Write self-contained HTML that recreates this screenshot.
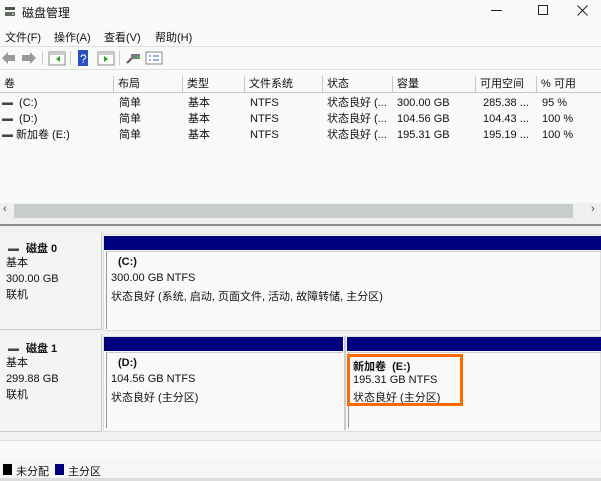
<!DOCTYPE html><html><head><meta charset="utf-8"><style>
*{margin:0;padding:0;box-sizing:border-box}
body{width:601px;height:481px;overflow:hidden;background:#f7faf7;font-family:"Liberation Sans","Noto Sans CJK SC",sans-serif;font-size:11px;color:#111;position:relative}
.a{position:absolute;white-space:nowrap}
.hd{position:absolute;top:76px;height:17px;border-right:1px solid #c8c8c8;border-bottom:1px solid #c8c8c8;background:#f7faf7;padding:1px 4px;line-height:15px}
.b{font-weight:bold}
.drv{display:inline-block;width:11px;height:3px;background:#444;border-top:1px solid #999;vertical-align:middle;margin-right:3px}
</style></head><body>
<!-- title -->
<div class="a" style="left:4px;top:6px;width:12px;height:11px;"><svg width="12" height="11"><rect x="1" y="1" width="10" height="3" fill="#555"/><rect x="1" y="6" width="10" height="4" fill="#666"/><rect x="8" y="7" width="2" height="2" fill="#7c7"/></svg></div>
<div class="a" style="left:22px;top:4px;font-size:12px">磁盘管理</div>
<div class="a" style="left:491px;top:10px;width:11px;height:1px;background:#222"></div>
<div class="a" style="left:538px;top:5px;width:10px;height:10px;border:1px solid #222"></div>
<svg class="a" style="left:577px;top:5px" width="11" height="11"><path d="M0.5 0.5L10.5 10.5M10.5 0.5L0.5 10.5" stroke="#222" stroke-width="1"/></svg>
<!-- menu -->
<div class="a" style="left:5px;top:29px">文件(F)</div>
<div class="a" style="left:54px;top:29px">操作(A)</div>
<div class="a" style="left:104px;top:29px">查看(V)</div>
<div class="a" style="left:155px;top:29px">帮助(H)</div>
<div class="a" style="left:0;top:46px;width:601px;height:1px;background:#dde0dd"></div>
<!-- toolbar -->
<svg class="a" style="left:0;top:48px" width="170" height="20">
<path d="M2 10 L8 4 V7 H15 V13 H8 V16 Z" fill="#999"/>
<path d="M36 10 L30 4 V7 H22 V13 H30 V16 Z" fill="#999"/>
<rect x="42" y="3" width="1" height="14" fill="#ccc"/>
<rect x="49" y="4" width="16" height="13" fill="#fff" stroke="#888"/><rect x="49" y="4" width="16" height="3" fill="#ccc"/><path d="M60 8 L56 11 L60 14Z" fill="#2a2"/>
<rect x="70" y="3" width="1" height="14" fill="#ccc"/>
<rect x="78" y="2" width="10" height="16" fill="#2b4fbf"/><text x="80" y="15" fill="#fff" font-size="12" font-family="Liberation Sans">?</text>
<rect x="98" y="4" width="16" height="13" fill="#fff" stroke="#888"/><rect x="98" y="4" width="16" height="3" fill="#ccc"/><path d="M104 8 L108 11 L104 14Z" fill="#2a2"/>
<rect x="119" y="3" width="1" height="14" fill="#ccc"/>
<path d="M127 15 L132 10" stroke="#555" stroke-width="2"/><rect x="131" y="6" width="9" height="5" fill="#778"/><rect x="137" y="8" width="3" height="2" fill="#3c3"/>
<rect x="146" y="4" width="16" height="12" fill="#fff" stroke="#888"/><path d="M149 8h2M153 8h6M149 12h2M153 12h6" stroke="#36c"/>
</svg>
<div class="a" style="left:0;top:69px;width:601px;height:1px;background:#dde0dd"></div>
<!-- list header -->
<div class="hd" style="left:0;width:114px">卷</div>
<div class="hd" style="left:114px;width:69px">布局</div>
<div class="hd" style="left:183px;width:62px">类型</div>
<div class="hd" style="left:245px;width:78px">文件系统</div>
<div class="hd" style="left:323px;width:70px">状态</div>
<div class="hd" style="left:393px;width:83px">容量</div>
<div class="hd" style="left:476px;width:61px">可用空间</div>
<div class="hd" style="left:537px;width:64px;border-right:none">% 可用</div>
<!-- rows -->
<div class="a" style="left:2px;top:95px;line-height:16px"><span class="drv"></span> (C:)<br><span class="drv"></span> (D:)<br><span class="drv"></span>新加卷 (E:)</div>
<div class="a" style="left:119px;top:95px;line-height:16px">简单<br>简单<br>简单</div>
<div class="a" style="left:188px;top:95px;line-height:16px">基本<br>基本<br>基本</div>
<div class="a" style="left:250px;top:95px;line-height:16px">NTFS<br>NTFS<br>NTFS</div>
<div class="a" style="left:327px;top:95px;line-height:16px">状态良好 (...<br>状态良好 (...<br>状态良好 (...</div>
<div class="a" style="left:397px;top:95px;line-height:16px">300.00 GB<br>104.56 GB<br>195.31 GB</div>
<div class="a" style="left:483px;top:95px;line-height:16px">285.38 ...<br>104.43 ...<br>195.19 ...</div>
<div class="a" style="left:542px;top:95px;line-height:16px">95 %<br>100 %<br>100 %</div>
<!-- hscroll -->
<div class="a" style="left:0;top:203px;width:601px;height:16px;background:#eef0ee"></div>
<div class="a" style="left:14px;top:204px;width:559px;height:14px;background:#c9cdc9"></div>
<div class="a" style="left:3px;top:203px;font-size:11px;color:#444">‹</div>
<div class="a" style="left:591px;top:203px;font-size:11px;color:#444">›</div>
<!-- splitter -->
<div class="a" style="left:0;top:219px;width:601px;height:6px;background:#eef0ee"></div>
<div class="a" style="left:0;top:224px;width:601px;height:2px;background:#8f918f"></div>
<div class="a" style="left:0;top:226px;width:601px;height:214px;background:#f0f2f0"></div>
<!-- disk 0 -->
<div class="a" style="left:0;top:232px;width:102px;height:98px;background:#f3f5f3;border-right:1px solid #ccc;border-bottom:1px solid #ccc"></div>
<div class="a" style="left:8px;top:240px"><span class="drv"></span><b style="margin-left:4px">磁盘 0</b></div>
<div class="a" style="left:6px;top:255px;line-height:16px">基本<br>300.00 GB<br>联机</div>
<div class="a" style="left:103px;top:234px;width:498px;height:97px;background:#f7faf7;border:1px solid #ddd"></div>
<div class="a" style="left:104px;top:236px;width:497px;height:14px;background:#00007f"></div>
<div class="a" style="left:106px;top:251px;width:495px;height:78px;border-left:1px solid #999;border-top:1px solid #ccc"></div>
<div class="a b" style="left:118px;top:256px">(C:)</div>
<div class="a" style="left:111px;top:272px">300.00 GB NTFS</div>
<div class="a" style="left:111px;top:288px">状态良好 (系统, 启动, 页面文件, 活动, 故障转储, 主分区)</div>
<!-- disk 1 -->
<div class="a" style="left:0;top:334px;width:102px;height:98px;background:#f3f5f3;border-right:1px solid #ccc;border-bottom:1px solid #ccc"></div>
<div class="a" style="left:8px;top:340px"><span class="drv"></span><b style="margin-left:4px">磁盘 1</b></div>
<div class="a" style="left:6px;top:355px;line-height:16px">基本<br>299.88 GB<br>联机</div>
<div class="a" style="left:103px;top:336px;width:498px;height:96px;background:#f7faf7;border:1px solid #ddd"></div>
<div class="a" style="left:104px;top:337px;width:239px;height:14px;background:#00007f"></div>
<div class="a" style="left:347px;top:337px;width:254px;height:14px;background:#00007f"></div>
<div class="a" style="left:344px;top:336px;width:2px;height:94px;background:#ccc"></div>
<div class="a" style="left:106px;top:352px;width:237px;height:76px;border-left:1px solid #999;border-top:1px solid #ccc"></div>
<div class="a" style="left:348px;top:352px;width:253px;height:76px;border-left:1px solid #999;border-top:1px solid #ccc"></div>
<div class="a b" style="left:118px;top:357px">(D:)</div>
<div class="a" style="left:111px;top:373px">104.56 GB NTFS</div>
<div class="a" style="left:111px;top:389px">状态良好 (主分区)</div>
<div class="a" style="left:347px;top:354px;width:116px;height:52px;border:3px solid #ff6a00"></div>
<div class="a b" style="left:353px;top:358px">新加卷 &nbsp;(E:)</div>
<div class="a" style="left:353px;top:374px">195.31 GB NTFS</div>
<div class="a" style="left:353px;top:389px">状态良好 (主分区)</div>
<!-- legend -->
<div class="a" style="left:0;top:440px;width:601px;height:1px;background:#ddd"></div>
<div class="a" style="left:0;top:460px;width:601px;height:19px;background:#f5f7f5"></div>
<div class="a" style="left:3px;top:464px;width:9px;height:11px;background:#000"></div>
<div class="a" style="left:16px;top:463px">未分配</div>
<div class="a" style="left:55px;top:464px;width:9px;height:11px;background:#00007f"></div>
<div class="a" style="left:68px;top:463px">主分区</div>
<div class="a" style="left:0;top:478px;width:601px;height:3px;background:#dcdedc"></div>
</body></html>
